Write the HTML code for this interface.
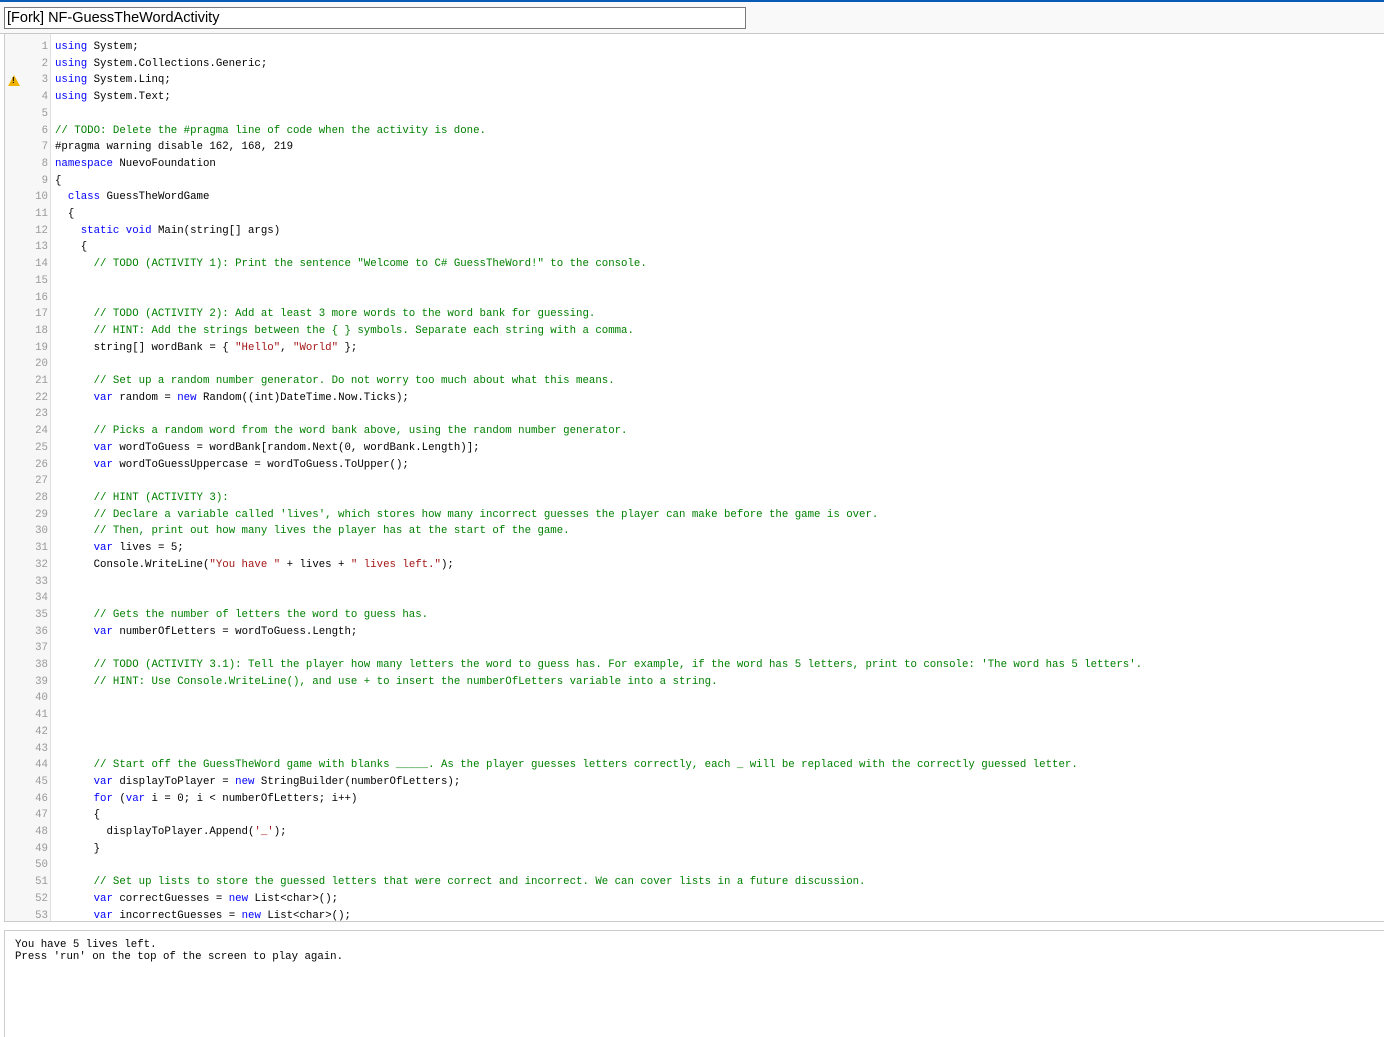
<!DOCTYPE html>
<html><head><meta charset="utf-8"><style>
html,body{margin:0;padding:0;background:#fff;width:1384px;height:1036px;overflow:hidden;}
.top{position:absolute;left:0;top:0;width:1384px;height:2px;background:#0a5bb5;}
.hdr{position:absolute;left:0;top:2px;width:1384px;height:31px;background:#f9f9f9;border-bottom:1px solid #c8c8c8;}
.title{position:absolute;left:4px;top:7px;width:738px;height:20px;border:1px solid #7a7a7a;background:#fff;font:14.5px "Liberation Sans",sans-serif;line-height:20px;padding-left:2px;box-sizing:content-box;color:#000;}
.ed{position:absolute;left:4px;top:34px;width:1380px;height:887px;border-left:1px solid #ccc;border-bottom:1px solid #ccc;overflow:hidden;}
.gut{position:absolute;left:0;top:0;width:45px;height:100%;background:#f7f7f7;border-right:1px solid #e0e0e0;}
.nums{position:absolute;left:0;top:5px;width:43px;text-align:right;font:10.73px "Liberation Mono",monospace;line-height:16.71px;color:#999;white-space:pre;}
.code{position:absolute;left:50px;top:5px;font:10.73px "Liberation Mono",monospace;line-height:16.71px;color:#000;white-space:pre;}
.k{color:#0000ff}.c{color:#008000}.s{color:#a31515}
.warn{position:absolute;left:3px;top:41px;width:0;height:0;border-left:6px solid transparent;border-right:6px solid transparent;border-bottom:11px solid #f0b400;}
.warn::after{content:"!";position:absolute;left:-2px;top:1px;font:bold 8px "Liberation Sans",sans-serif;color:#000;}
.out{position:absolute;left:4px;top:930px;width:1380px;height:106px;border-left:1px solid #ccc;border-top:1px solid #ccc;font:10.73px "Liberation Mono",monospace;line-height:12px;white-space:pre;color:#000;}
.out div{padding:8px 0 0 10px;}
</style></head><body>
<div class="top"></div>
<div class="hdr"></div>
<div class="title">[Fork] NF-GuessTheWordActivity</div>
<div class="ed">
<div class="gut"><div class="warn"></div><div class="nums">1
2
3
4
5
6
7
8
9
10
11
12
13
14
15
16
17
18
19
20
21
22
23
24
25
26
27
28
29
30
31
32
33
34
35
36
37
38
39
40
41
42
43
44
45
46
47
48
49
50
51
52
53</div></div>
<div class="code"><span class="k">using</span> System;
<span class="k">using</span> System.Collections.Generic;
<span class="k">using</span> System.Linq;
<span class="k">using</span> System.Text;

<span class="c">// TODO: Delete the #pragma line of code when the activity is done.</span>
#pragma warning disable 162, 168, 219
<span class="k">namespace</span> NuevoFoundation
{
  <span class="k">class</span> GuessTheWordGame
  {
    <span class="k">static</span> <span class="k">void</span> Main(string[] args)
    {
      <span class="c">// TODO (ACTIVITY 1): Print the sentence "Welcome to C# GuessTheWord!" to the console.</span>


      <span class="c">// TODO (ACTIVITY 2): Add at least 3 more words to the word bank for guessing.</span>
      <span class="c">// HINT: Add the strings between the { } symbols. Separate each string with a comma.</span>
      string[] wordBank = { <span class="s">"Hello"</span>, <span class="s">"World"</span> };

      <span class="c">// Set up a random number generator. Do not worry too much about what this means.</span>
      <span class="k">var</span> random = <span class="k">new</span> Random((int)DateTime.Now.Ticks);

      <span class="c">// Picks a random word from the word bank above, using the random number generator.</span>
      <span class="k">var</span> wordToGuess = wordBank[random.Next(0, wordBank.Length)];
      <span class="k">var</span> wordToGuessUppercase = wordToGuess.ToUpper();

      <span class="c">// HINT (ACTIVITY 3):</span>
      <span class="c">// Declare a variable called 'lives', which stores how many incorrect guesses the player can make before the game is over.</span>
      <span class="c">// Then, print out how many lives the player has at the start of the game.</span>
      <span class="k">var</span> lives = 5;
      Console.WriteLine(<span class="s">"You have "</span> + lives + <span class="s">" lives left."</span>);


      <span class="c">// Gets the number of letters the word to guess has.</span>
      <span class="k">var</span> numberOfLetters = wordToGuess.Length;

      <span class="c">// TODO (ACTIVITY 3.1): Tell the player how many letters the word to guess has. For example, if the word has 5 letters, print to console: 'The word has 5 letters'.</span>
      <span class="c">// HINT: Use Console.WriteLine(), and use + to insert the numberOfLetters variable into a string.</span>




      <span class="c">// Start off the GuessTheWord game with blanks _____. As the player guesses letters correctly, each _ will be replaced with the correctly guessed letter.</span>
      <span class="k">var</span> displayToPlayer = <span class="k">new</span> StringBuilder(numberOfLetters);
      <span class="k">for</span> (<span class="k">var</span> i = 0; i &lt; numberOfLetters; i++)
      {
        displayToPlayer.Append(<span class="s">'_'</span>);
      }

      <span class="c">// Set up lists to store the guessed letters that were correct and incorrect. We can cover lists in a future discussion.</span>
      <span class="k">var</span> correctGuesses = <span class="k">new</span> List&lt;char&gt;();
      <span class="k">var</span> incorrectGuesses = <span class="k">new</span> List&lt;char&gt;();</div>
</div>
<div class="out"><div>You have 5 lives left.
Press 'run' on the top of the screen to play again.</div></div>
</body></html>
